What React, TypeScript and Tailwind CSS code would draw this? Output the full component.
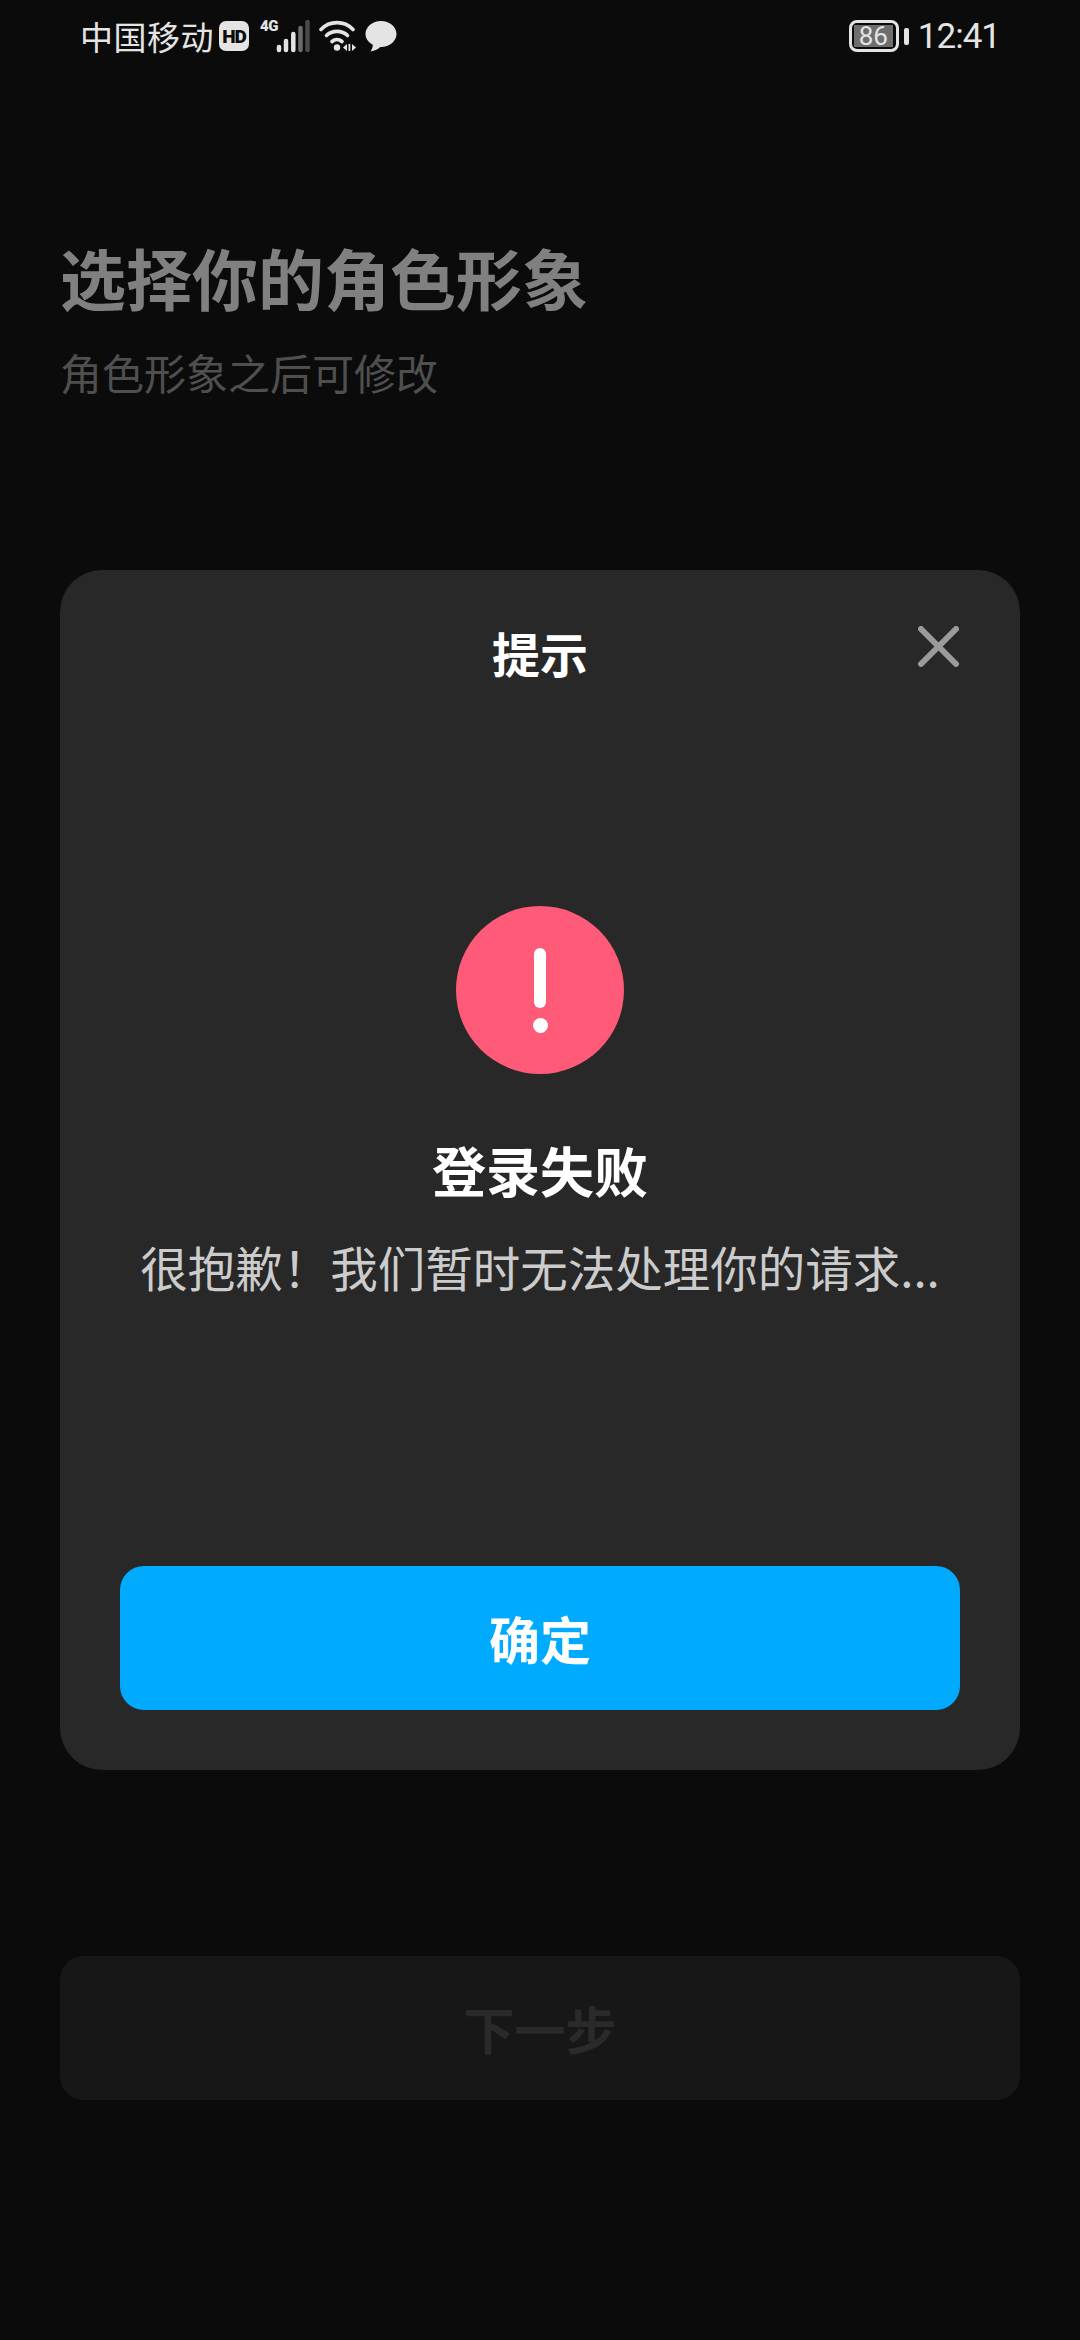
import * as React from 'react';

const cjk = { fontFamily: '"Noto Sans CJK SC", "Noto Sans", sans-serif' };

function StatusBar() {
  return (
    <div className="flex h-[72px] items-center justify-between pl-[80px] pr-[80px] text-[#e4e4e4]">
      <div className="flex items-center">
        <span className="text-[33px] leading-none tracking-[0.5px]">中国移动</span>
        <div className="ml-[5px] flex h-[30px] w-[30px] items-center justify-center rounded-[7px] bg-[#e4e4e4] font-['Roboto'] text-[19px] font-black leading-none tracking-[-1px] text-[#0b0b0b]">
          HD
        </div>
        <div className="relative ml-[11px] h-[34px] w-[50px]">
          <span className="absolute left-0 top-0 font-['Roboto'] text-[15px] font-black leading-none tracking-[-0.5px]">4G</span>
          <svg className="absolute inset-0" width="50" height="34" viewBox="0 0 50 34" aria-hidden="true">
            <g strokeWidth="4.500" strokeLinecap="round" fill="none">
              <path d="M19 28v3" stroke="#e4e4e4" />
              <path d="M26 22v9" stroke="#e4e4e4" />
              <path d="M33.300 15v16" stroke="#e4e4e4" />
              <path d="M40.500 9v22" stroke="#6b6b6b" />
              <path d="M47.500 3v28" stroke="#4a4a4a" />
            </g>
          </svg>
        </div>
        <svg className="ml-[9px]" width="38" height="32" viewBox="0 0 38 32" aria-hidden="true">
          <g fill="none" stroke="#e4e4e4" strokeWidth="3.600" strokeLinecap="round">
            <path d="M2 9.500C10.500 0.300 25.500 0.300 34 9.500" />
            <path d="M7.500 15.500C13 10 23 10 28.500 15.500" />
            <path d="M13 21.500C16 19 20 19 23 21.500" />
          </g>
          <circle cx="18" cy="27.500" r="3.200" fill="#e4e4e4" />
          <path d="M28 24v7l-4-3.500z" fill="#e4e4e4" />
          <path d="M29.500 24h1.800v7h-1.800z" fill="#e4e4e4" />
          <path d="M33 24l4 3.500-4 3.500z" fill="#e4e4e4" />
        </svg>
        <svg className="ml-[8px]" width="32" height="32" viewBox="0 0 32 32" aria-hidden="true">
          <path
            d="M16 1C7.500 1 0.500 6.700 0.500 14C0.500 18.500 3.300 22.300 7.700 24.600C7.900 26.700 7.300 29 5.500 31.500C10 30.800 13.300 29 15.300 27C15.500 27 15.800 27 16 27C24.500 27 31.500 21.300 31.500 14C31.500 6.700 24.500 1 16 1Z"
            fill="#e4e4e4"
          />
        </svg>
      </div>
      <div className="flex items-center">
        <div className="flex h-[32px] w-[50px] items-center rounded-[8px] border-[3px] border-[#e4e4e4] p-[2px]">
          <div className="flex h-full w-[39px] items-center justify-center bg-[#6e6e6e] font-['Roboto'] text-[26px] leading-none">86</div>
        </div>
        <div className="ml-[5px] h-[17px] w-[5px] rounded-[2px] bg-[#e4e4e4]" />
        <span className="ml-[9px] font-['Roboto'] text-[35px] font-normal leading-none tracking-[-1px]">12:41</span>
      </div>
    </div>
  );
}

function Dialog() {
  return (
    <div className="relative mx-[60px] mt-[168px] flex h-[1200px] flex-col items-center rounded-[42px] bg-[#282828]">
      <h2 className="mt-[52px] text-[48px] font-bold leading-[60px] text-white">提示</h2>
      <button type="button" className="absolute right-[61px] top-[56px]" aria-label="关闭">
        <svg className="block" width="41" height="41" viewBox="0 0 41 41" aria-hidden="true">
          <path d="M3 3L38 38M38 3L3 38" stroke="#9b9b9b" strokeWidth="6" strokeLinecap="round" />
        </svg>
      </button>
      <div className="mt-[224px] flex h-[168px] w-[168px] flex-col items-center rounded-full bg-[#ff5a78] pt-[42px]">
        <div className="h-[60px] w-[12px] rounded-full bg-white" />
        <div className="mt-[10px] h-[15px] w-[15px] rounded-full bg-white" />
      </div>
      <h3 className="mt-[61px] text-[54px] font-bold leading-[70px] text-white">登录失败</h3>
      <p className="mt-[30px] text-[47.5px] leading-[64px] text-[#cccccc]">很抱歉！我们暂时无法处理你的请求...</p>
      <button
        type="button"
        className="mt-auto mb-[60px] flex h-[144px] w-[840px] items-center justify-center rounded-[24px] bg-[#00aaff] text-[51px] font-bold text-white"
      >
        确定
      </button>
    </div>
  );
}

export default function App() {
  return (
    <div className="flex h-[2340px] w-[1080px] flex-col overflow-hidden bg-[#0b0b0b]" style={cjk}>
      <StatusBar />
      <div className="px-[60px] pt-[159px]">
        <h1 className="text-[66px] font-bold leading-[90px] text-[#808080]">选择你的角色形象</h1>
        <p className="mt-[21px] text-[42px] leading-[60px] text-[#4f4f4f]">角色形象之后可修改</p>
      </div>
      <Dialog />
      <button
        type="button"
        className="mx-[60px] mt-[186px] flex h-[144px] items-center justify-center rounded-[24px] bg-[#171717] text-[51px] font-bold text-[#2a2a2a]"
      >
        下一步
      </button>
    </div>
  );
}
